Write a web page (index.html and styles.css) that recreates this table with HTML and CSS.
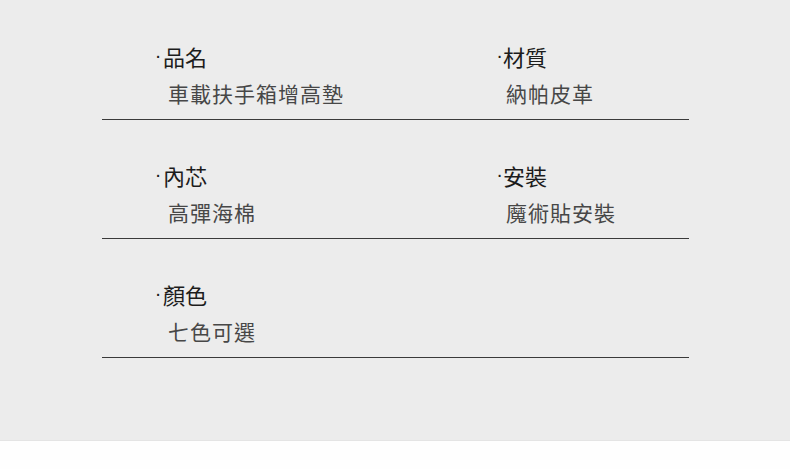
FILE: index.html
```html
<!DOCTYPE html>
<html lang="zh-Hant">
<head>
<meta charset="utf-8">
<title>商品規格</title>
<link rel="stylesheet" href="styles.css">
</head>
<body>
<div class="panel">
  <div class="spec">
    <div class="row">
      <div class="item">
        <div class="label"><span class="dot">·</span>品名</div>
        <div class="value">車載扶手箱增高墊</div>
      </div>
      <div class="item item-right">
        <div class="label"><span class="dot">·</span>材質</div>
        <div class="value">納帕皮革</div>
      </div>
    </div>
    <div class="row">
      <div class="item">
        <div class="label"><span class="dot">·</span>內芯</div>
        <div class="value">高彈海棉</div>
      </div>
      <div class="item item-right">
        <div class="label"><span class="dot">·</span>安裝</div>
        <div class="value">魔術貼安裝</div>
      </div>
    </div>
    <div class="row">
      <div class="item">
        <div class="label"><span class="dot">·</span>顏色</div>
        <div class="value">七色可選</div>
      </div>
    </div>
  </div>
</div>
<div class="footer"></div>
</body>
</html>
```
FILE: styles.css
```css
html, body {
  margin: 0;
  padding: 0;
  background: #fefefe;
}
body {
  width: 790px;
  height: 469px;
  overflow: hidden;
  font-family: "Noto Sans CJK TC", "Noto Sans CJK SC", sans-serif;
}
.panel {
  height: 441px;
  padding-top: 1px;
  background: #ececec;
  border-bottom: 1px solid #e4e4e4;
  box-sizing: border-box;
}
.spec {
  margin-left: 102px;
  width: 587px;
}
.row {
  display: grid;
  grid-template-columns: 343px 1fr;
  padding: 40px 0 11px 51px;
  border-bottom: 1px solid #3a3a3a;
}
.label {
  font-size: 22px;
  line-height: 30px;
  color: #1c1c1c;
  white-space: nowrap;
  display: flex;
  align-items: center;
}
.dot {
  font-family: "Liberation Sans", sans-serif;
  font-size: 20px;
  width: 10px;
  text-align: center;
  position: relative;
  top: -1px;
}
.value {
  margin-top: 7px;
  font-size: 21px;
  line-height: 30px;
  letter-spacing: 1px;
  color: #474747;
  padding-left: 15px;
  white-space: nowrap;
}
.item-right .dot {
  width: 7px;
}
.item-right .value {
  padding-left: 10px;
}
.footer {
  height: 28px;
  background: #fefefe;
}
```
